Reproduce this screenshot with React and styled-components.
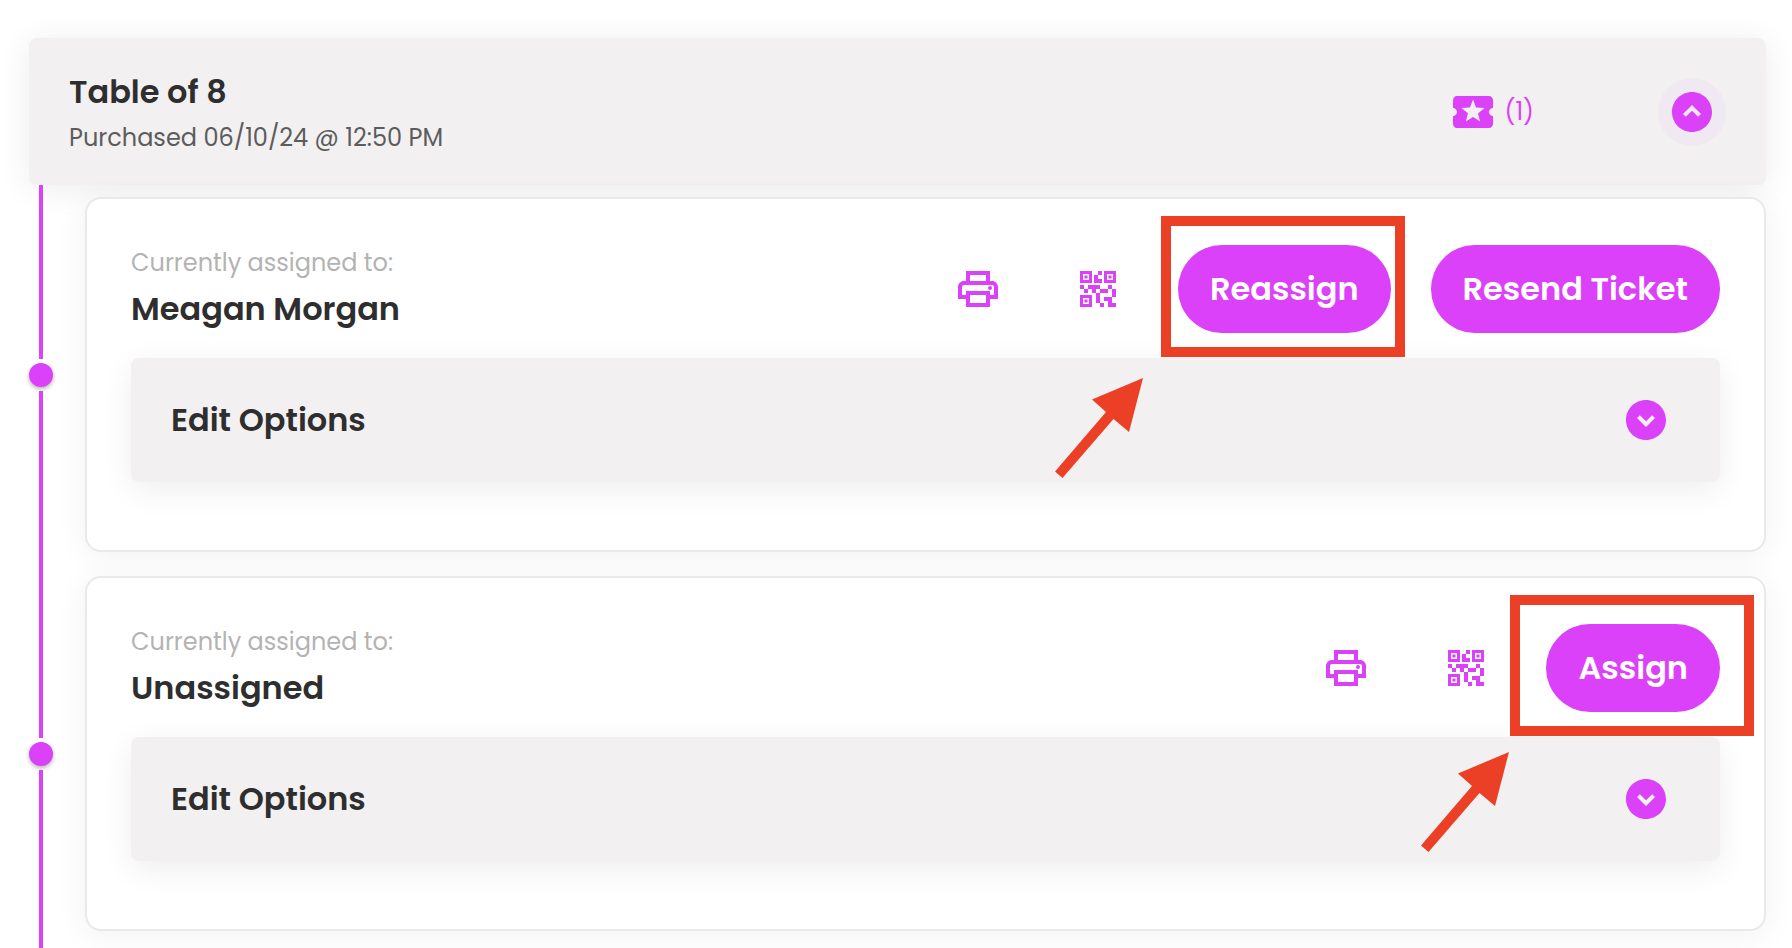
import React from "react";
import styled, { createGlobalStyle } from "styled-components";
import {
  MdExpandCircleDown,
  MdLocalActivity,
  MdOutlinePrint,
  MdQrCode2,
} from "react-icons/md";

const accent = "#db41f8";
const marker = "#ec4026";

const GlobalStyle = createGlobalStyle`
  * {
    box-sizing: border-box;
  }

  body {
    margin: 0;
    background-color: white;
    color: #2e2e2e;
    font-family: Poppins, Inter, "Open Sans", sans-serif;
  }
`;

const StylePage = styled.main`
  min-height: 100vh;
  padding: 38px 26px 0 29px;
  display: flex;
  flex-direction: column;
`;

const StyleOrder = styled.header`
  display: flex;
  align-items: center;
  justify-content: space-between;
  min-height: 147px;
  padding: 0 40px;
  border-radius: 8px;
  background-color: #f2f0f1;
  box-shadow: 0 4px 32px rgba(0, 0, 0, 0.08);
`;

const StyleOrderActions = styled.div`
  display: flex;
  align-items: center;
  gap: 124px;
`;

const TextBlock = styled.div`
  display: flex;
  flex-direction: column;
  gap: 4px;
`;

const Title = styled.h2`
  margin: 0;
  font-size: 32px;
  line-height: 48px;
  font-weight: 600;
`;

const SubTitle = styled.p`
  margin: 0;
  font-size: 24px;
  line-height: 36px;
  color: ${(props) => (props.$muted ? "#b3b3b3" : "#5c5c5c")};
`;

const TicketCount = styled.span`
  display: flex;
  align-items: center;
  gap: 8px;
  font-size: 24px;
  line-height: 36px;
  color: ${accent};
`;

const ToggleButton = styled.button`
  display: flex;
  padding: 10px;
  border: none;
  border-radius: 50%;
  color: ${accent};
  background-color: ${(props) => (props.$open ? "rgba(219, 65, 248, 0.04)" : "transparent")};
  cursor: pointer;

  svg {
    transform: rotate(${(props) => (props.$open ? "180deg" : "0deg")});
  }
`;

const StyleTickets = styled.ul`
  margin: 0;
  padding: 0;
  list-style: none;
`;

const StyleTicket = styled.li`
  display: flex;
  gap: 32px;
`;

const Rail = styled.div`
  width: 24px;
  display: flex;
  flex-direction: column;
  align-items: center;
  gap: 4px;
  flex-shrink: 0;
`;

const RailLine = styled.span`
  width: 4px;
  flex: 1;
  background-color: ${accent};
`;

const RailDot = styled.span`
  width: 24px;
  height: 24px;
  border-radius: 50%;
  background-color: ${accent};
  box-shadow: 0 2px 4px rgba(0, 0, 0, 0.3);
`;

const RailEnd = styled(Rail)`
  flex: 1;
`;

const StyleCard = styled.article`
  flex: 1;
  margin: 12px 0;
  padding: 46px 44px 68px;
  border: 2px solid #e9e9e9;
  border-radius: 16px;
  background-color: white;
  box-shadow: 0 4px 32px rgba(0, 0, 0, 0.06);
`;

const CardTop = styled.div`
  display: flex;
  align-items: center;
  justify-content: space-between;
  margin-bottom: 25px;
`;

const CardActions = styled.div`
  display: flex;
  align-items: center;
`;

const IconButton = styled.button`
  display: flex;
  margin-right: 24px;
  padding: 20px 24px;
  border: none;
  background: none;
  color: ${accent};
  cursor: pointer;

  & + & {
    margin-right: 32px;
  }
`;

const PillButton = styled.button`
  height: 88px;
  padding: 0 32px;
  border: none;
  border-radius: 44px;
  background-color: ${accent};
  color: white;
  font-family: inherit;
  font-size: 32px;
  font-weight: 600;
  cursor: pointer;
`;

const Marked = styled.div`
  position: relative;
  display: flex;

  & + ${PillButton} {
    margin-left: 40px;
  }
`;

const MarkFrame = styled.span`
  position: absolute;
  top: -29px;
  left: 50%;
  width: 244px;
  height: 141px;
  margin-left: -123px;
  border: 10px solid ${marker};
  pointer-events: none;
`;

const MarkArrow = styled.svg`
  position: absolute;
  top: ${(props) => props.$top}px;
  right: ${(props) => props.$right}px;
  width: 88px;
  height: 100px;
  overflow: visible;
`;

const StyleOptions = styled.section`
  display: flex;
  align-items: center;
  justify-content: space-between;
  min-height: 124px;
  padding: 0 40px;
  border-radius: 8px;
  background-color: #f2f0f1;
  box-shadow: 0 8px 32px rgba(0, 0, 0, 0.07);
`;

const Mark = ({ arrow, children }) => (
  <Marked>
    {children}
    <MarkFrame>
      <MarkArrow $top={arrow.top} $right={arrow.right} viewBox="0 0 88 100" aria-hidden="true">
        <path d="M88 0 37 21.5 51 34 0 93.5 7.5 100 58.5 41 74 54Z" fill={marker} />
      </MarkArrow>
    </MarkFrame>
  </Marked>
);

const Ticket = ({ ticket }) => {
  return (
    <StyleTicket>
      <Rail>
        <RailLine />
        <RailDot />
        <RailLine />
      </Rail>
      <StyleCard>
        <CardTop>
          <TextBlock>
            <SubTitle $muted>Currently assigned to:</SubTitle>
            <Title as="h3">{ticket.name}</Title>
          </TextBlock>
          <CardActions>
            <IconButton aria-label="Print ticket">
              <MdOutlinePrint size={48} />
            </IconButton>
            <IconButton aria-label="Show QR code">
              <MdQrCode2 size={48} />
            </IconButton>
            <Mark arrow={ticket.arrow}>
              <PillButton>{ticket.action}</PillButton>
            </Mark>
            {ticket.canResend && <PillButton>Resend Ticket</PillButton>}
          </CardActions>
        </CardTop>
        <StyleOptions>
          <Title as="h4">Edit Options</Title>
          <ToggleButton aria-label="Show options">
            <MdExpandCircleDown size={48} />
          </ToggleButton>
        </StyleOptions>
      </StyleCard>
    </StyleTicket>
  );
};

const App = () => {
  let tickets = [
    { name: "Meagan Morgan", action: "Reassign", canResend: true, arrow: { top: 152, right: 252 } },
    { name: "Unassigned", action: "Assign", canResend: false, arrow: { top: 147, right: 235 } },
  ];

  return (
    <>
      <GlobalStyle />
      <StylePage>
        <StyleOrder>
          <TextBlock>
            <Title>Table of 8</Title>
            <SubTitle>Purchased 06/10/24 @ 12:50 PM</SubTitle>
          </TextBlock>
          <StyleOrderActions>
            <TicketCount>
              <MdLocalActivity size={48} />
              (1)
            </TicketCount>
            <ToggleButton $open aria-label="Hide tickets">
              <MdExpandCircleDown size={48} />
            </ToggleButton>
          </StyleOrderActions>
        </StyleOrder>
        <StyleTickets>
          {tickets.map((ticket) => {
            return <Ticket ticket={ticket} key={ticket.name} />;
          })}
        </StyleTickets>
        <RailEnd>
          <RailLine />
        </RailEnd>
      </StylePage>
    </>
  );
};

export default App;
